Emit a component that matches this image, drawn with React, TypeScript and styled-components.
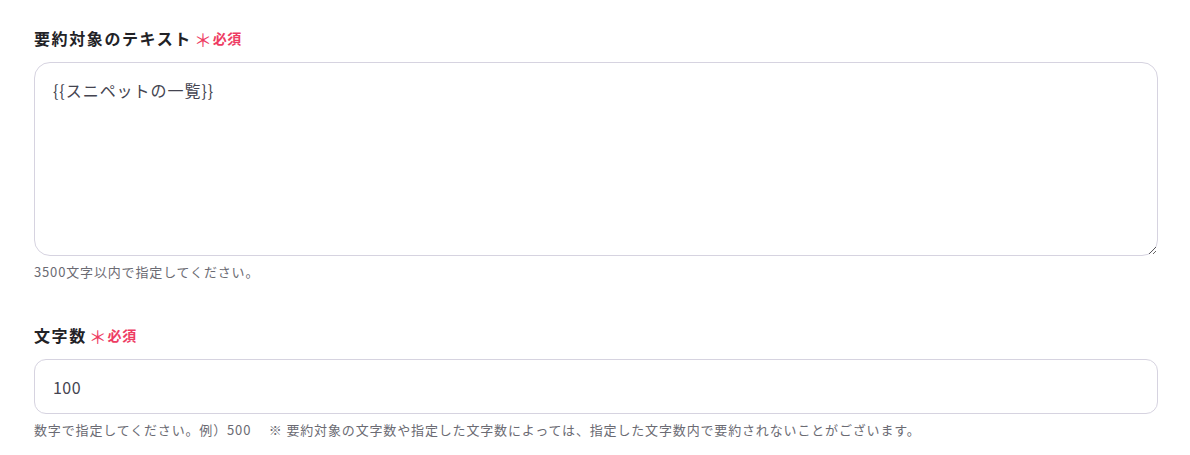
import React from "react";
import styled, { createGlobalStyle } from "styled-components";

const Global = createGlobalStyle`
  html, body { margin: 0; padding: 0; background: #ffffff; }
  body { font-family: "Noto Sans CJK JP", "Noto Sans", sans-serif; }
  * { box-sizing: border-box; }
`;

const Page = styled.div`
  padding: 26px 32px 0 34px;
  display: flex;
  flex-direction: column;
`;

const Field = styled.div<{ $gap?: number }>`
  display: flex;
  flex-direction: column;
  margin-bottom: ${(p) => p.$gap ?? 0}px;
`;

const Label = styled.div`
  display: flex;
  align-items: center;
  height: 24px;
  font-size: 16px;
  font-weight: 700;
  letter-spacing: 0.1em;
  color: #222226;
  margin-bottom: 12px;
`;

const Required = styled.span`
  display: inline-flex;
  align-items: center;
  color: #ee3c63;
  font-size: 14px;
  font-weight: 700;
  letter-spacing: 0.05em;
  margin-left: 2px;
`;

const Star = styled.span`
  font-size: 18px;
  font-weight: 400;
  margin-right: 0px;
  line-height: 1;
  position: relative;
  top: 1px;
`;

const TextArea = styled.textarea`
  width: 100%;
  height: 194px;
  border: 1px solid #d6d3e0;
  border-radius: 16px;
  padding: 15px 18px;
  font-family: inherit;
  font-size: 16px;
  letter-spacing: 0.06em;
  color: #444450;
  resize: vertical;
  outline: none;
  background: #fff;
  line-height: 24px;
`;

const Input = styled.input`
  width: 100%;
  height: 55px;
  border: 1px solid #d6d3e0;
  border-radius: 12px;
  padding: 0 18px;
  font-family: inherit;
  font-size: 16px;
  letter-spacing: 0.03em;
  color: #444450;
  outline: none;
  background: #fff;
`;

const Help = styled.div`
  font-size: 13px;
  letter-spacing: 0.065em;
  color: #6b6b73;
  margin-top: 7px;
  line-height: 18px;
  white-space: pre;
`;

export default function App() {
  return (
    <>
      <Global />
      <Page>
        <Field $gap={42}>
          <Label>
            要約対象のテキスト
            <Required>
              <Star>＊</Star>必須
            </Required>
          </Label>
          <TextArea defaultValue="{{スニペットの一覧}}" />
          <Help>3500文字以内で指定してください。</Help>
        </Field>
        <Field>
          <Label>
            文字数
            <Required>
              <Star>＊</Star>必須
            </Required>
          </Label>
          <Input defaultValue="100" />
          <Help>
            {"数字で指定してください。例）500　 ※ 要約対象の文字数や指定した文字数によっては、指定した文字数内で要約されないことがございます。"}
          </Help>
        </Field>
      </Page>
    </>
  );
}
